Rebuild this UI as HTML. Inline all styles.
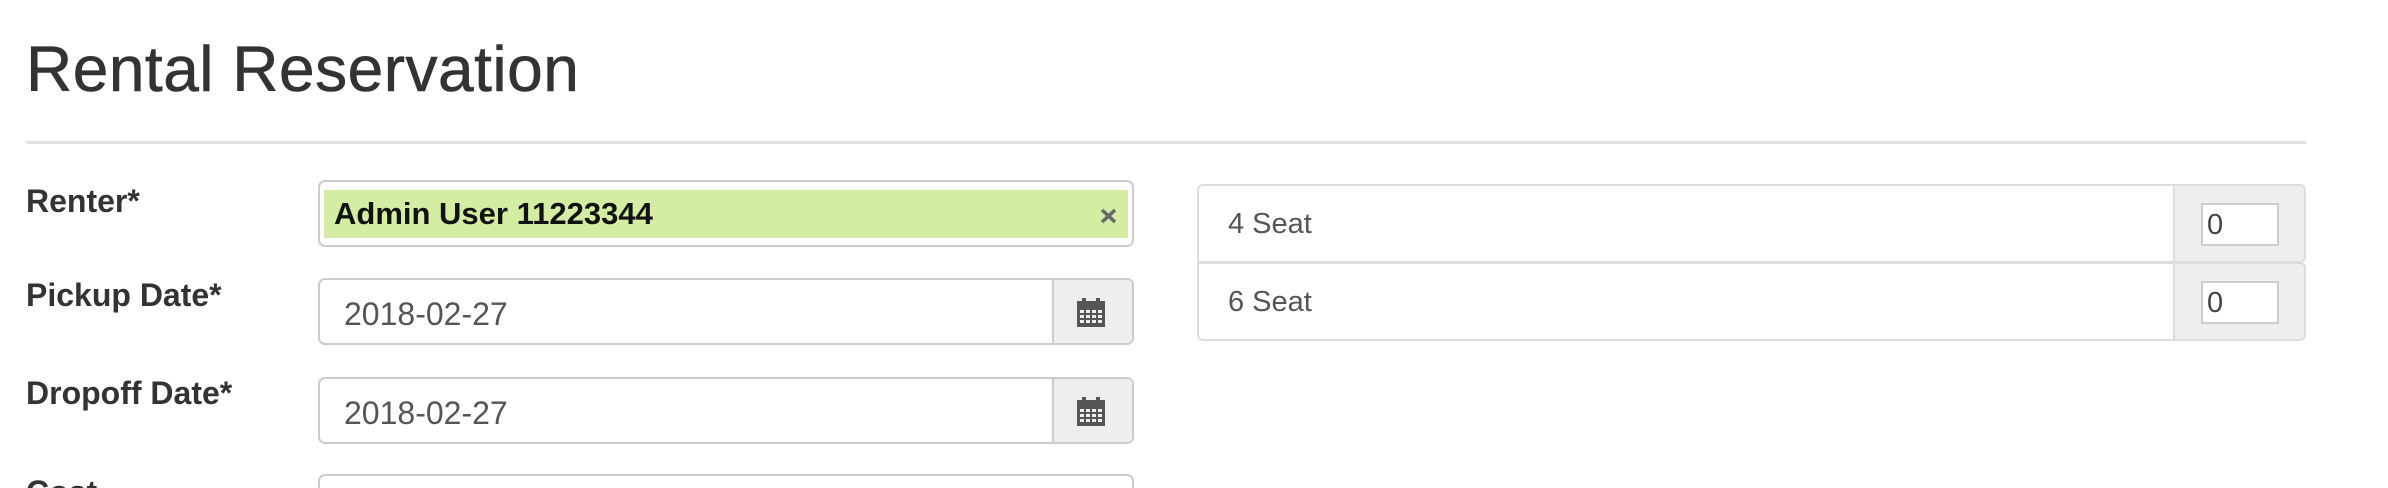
<!DOCTYPE html>
<html style="overflow:hidden;height:488px"><head><style>
body{margin:0;width:2388px;height:488px;background:#fff;position:relative;overflow:hidden;font-family:"Liberation Sans",sans-serif;color:#333}
div,span{position:absolute;box-sizing:border-box}
.t{left:26px;top:32px;font-size:64px;letter-spacing:0.5px;color:#333;white-space:nowrap;-webkit-text-stroke:0.6px #333}
.hr{left:26px;top:141px;width:2280px;height:3px;background:#e2e2e2}
.lb{left:26px;font-weight:bold;font-size:32px;color:#333;white-space:nowrap}
.box{left:318px;width:816px;border:2px solid #ccc;border-radius:7px;background:#fff}
.ad{right:0;top:0;bottom:0;width:80px;background:#eee;border-left:2px solid #ccc;border-radius:0 6px 6px 0}
.dt{left:24px;font-size:32px;color:#555;top:16px}
.r{left:1197px;width:978px;border:2px solid #ddd;border-radius:6px 0 0 0;background:#fff}
.ra{left:2175px;width:131px;background:#eee;border:2px solid #ddd;border-left:none;border-radius:0 6px 6px 0}
.in{left:26px;top:17px;width:78px;height:43px;border:2px solid #ccc;background:#fff;font-size:29px;color:#444;padding-left:4px;line-height:40px}
.st{left:29px;font-size:29px;color:#555;top:22px}
</style></head><body>
<div class="t">Rental Reservation</div>
<div class="hr"></div>
<div class="lb" style="top:183px">Renter*</div>
<div class="lb" style="top:277px">Pickup Date*</div>
<div class="lb" style="top:375px">Dropoff Date*</div>
<div class="lb" style="top:474px">Cost</div>

<div class="box" style="top:180px;height:67px">
 <div style="left:4px;top:8px;right:4px;height:48px;background:#d3eda3"></div>
 <span style="left:14px;top:14px;font-size:31px;font-weight:bold;color:#111">Admin User 11223344</span>
 <svg style="position:absolute;left:780px;top:26px" width="17" height="16"><path d="M2 2L15 14M15 2L2 14" stroke="#666" stroke-width="3.5"/></svg>
</div>

<div class="box" style="top:278px;height:67px">
 <span class="dt">2018-02-27</span>
 <div class="ad"><svg style="position:absolute;left:23px;top:18px" width="28" height="29" viewBox="0 0 28 29"><rect x="0" y="3" width="28" height="26" fill="#555"/><rect x="5" y="0" width="4" height="6" fill="#555"/><rect x="19" y="0" width="4" height="6" fill="#555"/><g fill="#eee"><rect x="3" y="12" width="4" height="3"/><rect x="9" y="12" width="4" height="3"/><rect x="15" y="12" width="4" height="3"/><rect x="21" y="12" width="4" height="3"/><rect x="3" y="17" width="4" height="3"/><rect x="9" y="17" width="4" height="3"/><rect x="15" y="17" width="4" height="3"/><rect x="21" y="17" width="4" height="3"/><rect x="3" y="22" width="4" height="3"/><rect x="9" y="22" width="4" height="3"/><rect x="15" y="22" width="4" height="3"/><rect x="21" y="22" width="4" height="3"/></g></svg></div>
</div>
<div class="box" style="top:377px;height:67px">
 <span class="dt">2018-02-27</span>
 <div class="ad"><svg style="position:absolute;left:23px;top:18px" width="28" height="29" viewBox="0 0 28 29"><rect x="0" y="3" width="28" height="26" fill="#555"/><rect x="5" y="0" width="4" height="6" fill="#555"/><rect x="19" y="0" width="4" height="6" fill="#555"/><g fill="#eee"><rect x="3" y="12" width="4" height="3"/><rect x="9" y="12" width="4" height="3"/><rect x="15" y="12" width="4" height="3"/><rect x="21" y="12" width="4" height="3"/><rect x="3" y="17" width="4" height="3"/><rect x="9" y="17" width="4" height="3"/><rect x="15" y="17" width="4" height="3"/><rect x="21" y="17" width="4" height="3"/><rect x="3" y="22" width="4" height="3"/><rect x="9" y="22" width="4" height="3"/><rect x="15" y="22" width="4" height="3"/><rect x="21" y="22" width="4" height="3"/></g></svg></div>
</div>
<div class="box" style="top:474px;height:14px;border-bottom:none;border-radius:7px 7px 0 0"></div>

<div class="r" style="top:184px;height:79px"><span class="st">4 Seat</span></div>
<div class="ra" style="top:184px;height:79px"><div class="in">0</div></div>
<div class="r" style="top:262px;height:79px;border-radius:0 0 0 6px"><span class="st">6 Seat</span></div>
<div class="ra" style="top:262px;height:79px"><div class="in">0</div></div>
</body></html>
